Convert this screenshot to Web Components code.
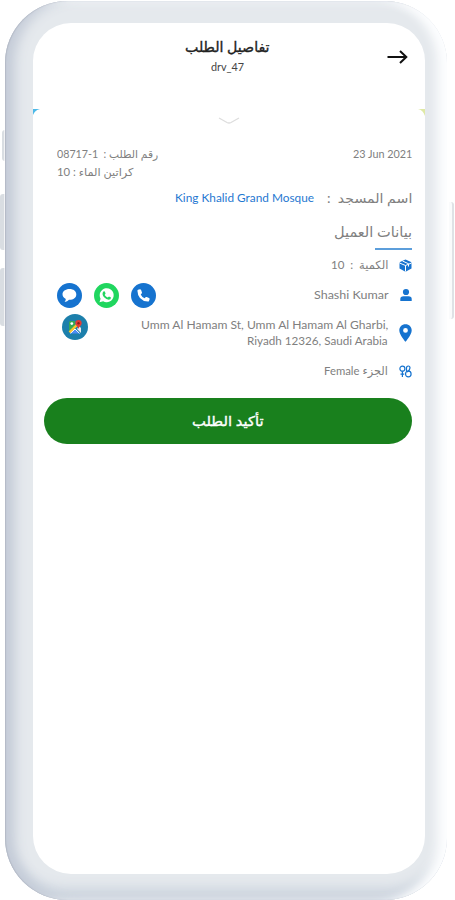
<!DOCTYPE html>
<html lang="ar">
<head>
<meta charset="utf-8">
<meta name="viewport" content="width=device-width, initial-scale=1">
<title>تفاصيل الطلب</title>
<style>
    body {
        margin: 0;
        background: #fff;
        font-family: Lato, "DejaVu Sans", sans-serif;
        color: #808080;
        overflow: hidden;
    }
</style>
</head>
<body>
<phone-frame>
    <order-header>
        <fit-text slot="title" width="85" size="14" medium>تفاصيل الطلب</fit-text>
        <fit-text slot="driver" width="33" size="10.5">drv_47</fit-text>
    </order-header>
    <order-sheet>
        <order-meta>
            <fit-text slot="date" width="59" size="11">23 Jun 2021</fit-text>
            <fit-text slot="number" width="101" size="11" rtl>رقم الطلب : &nbsp;<bdi dir="ltr">08717-1</bdi></fit-text>
            <fit-text slot="boxes" width="76" size="11" rtl>كراتين الماء : 10</fit-text>
        </order-meta>
        <mosque-row>
            <fit-text slot="label" width="85" size="13" rtl>اسم المسجد &nbsp;:</fit-text>
            <fit-text slot="name" width="139" size="12">King Khalid Grand Mosque</fit-text>
        </mosque-row>
        <section-title><fit-text width="78" size="14" rtl>بيانات العميل</fit-text></section-title>
        <info-row icon="box" style="height: 30px">
            <fit-text width="57" size="11.5" rtl>الكمية &nbsp;: &nbsp;10</fit-text>
        </info-row>
        <info-row icon="person" style="height: 30px">
            <fit-text width="74" size="12">Shashi Kumar</fit-text>
            <round-button slot="actions" icon="chat" color="#1673cf"></round-button>
            <round-button slot="actions" icon="whatsapp" color="#20d65f"></round-button>
            <round-button slot="actions" icon="phone" color="#1673cf"></round-button>
        </info-row>
        <info-row icon="pin" style="height: 46px">
            <fit-text width="247" size="11.5">Umm Al Hamam St, Umm Al Hamam Al Gharbi,</fit-text>
            <fit-text width="141" size="11.5">Riyadh 12326, Saudi Arabia</fit-text>
            <round-button slot="actions" class="map" icon="map" color="#1c7fab"></round-button>
        </info-row>
        <info-row icon="gender" style="height: 30px">
            <fit-text width="64" size="11.5" rtl>الجزء Female</fit-text>
        </info-row>
        <confirm-button><fit-text width="72" size="13.5" medium>تأكيد الطلب</fit-text></confirm-button>
    </order-sheet>
</phone-frame>

<script>
const icons = {
    box: `<svg width="13" height="13" viewBox="0 0 26 26"><path fill="#1673cf" d="M13 1 L24 6 L25 8 V19 L14 25 H12 L1 19 V8 L2 6Z"/><path fill="none" stroke="#fff" stroke-width="2" d="M1 8 L13 13 L25 8 M13 13 V25 M7 4 L19 9.5 V15"/></svg>`,
    person: `<svg width="12" height="14" viewBox="0 0 12 14"><circle cx="6" cy="4" r="3.1" fill="#1673cf"/><path fill="#1673cf" d="M0.3 13 V11 Q0.3 8.3 3.5 8.3 H8.5 Q11.7 8.3 11.7 11 V13Z"/></svg>`,
    pin: `<svg width="13" height="18" viewBox="0 0 13 18"><path fill="#1673cf" fill-rule="evenodd" d="M6.5 0.3 C2.8 0.3 0.3 3 0.3 6.4 C0.3 10.7 6.5 17.7 6.5 17.7 S12.7 10.7 12.7 6.4 C12.7 3 10.2 0.3 6.5 0.3Z M6.5 4 A2.4 2.4 0 1 1 6.5 8.8 A2.4 2.4 0 1 1 6.5 4Z"/></svg>`,
    gender: `<svg width="13" height="13" viewBox="0 0 13 13" fill="none" stroke="#1673cf" stroke-width="1.2"><circle cx="3.4" cy="3.7" r="2.5"/><path d="M3.4 6.2 V12 M1.5 9.2 H5.2 M7.5 6.5 V3.2 Q7.5 1 9.3 1 Q11 1 11 3 L10 5.8 M8 7 L10 5.2"/><circle cx="9.3" cy="9" r="2.8"/></svg>`,
    chat: `<svg width="25" height="25" viewBox="0 0 25 25"><path fill="#fff" d="M12.5 6 C8.4 6 5.5 8.3 5.5 11.3 C5.5 13.5 6.8 15 8.8 16 Q8.8 17.5 7.6 19 Q10.5 18.6 12 16.8 C16.5 16.9 19.3 14.5 19.3 11.4 C19.3 8.2 16.5 6 12.5 6Z"/></svg>`,
    whatsapp: `<svg width="25" height="25" viewBox="0 0 25 25"><path fill="#fff" d="M5.5 19.3 L6.6 15.7 A7 7 0 1 1 9.2 18.3Z"/><path fill="#20d65f" d="M9 8.9 Q10 7.8 10.8 8.6 L11.6 10.5 L10.7 11.9 Q11.8 13.8 13.7 14.5 L15 13.4 L17 14.4 Q17 16.8 14.6 16.8 Q12.3 16.6 10.1 14.3 Q7.7 11.2 9 8.9Z"/></svg>`,
    phone: `<svg width="25" height="25" viewBox="0 0 25 25"><path fill="#fff" d="M7 6.7 L9 6.3 Q9.8 6.3 10.1 7 L11 9.4 Q11.1 10.2 10.4 10.7 L9.7 11.4 Q10.9 14 13.6 15.3 L14.5 14.3 Q15 13.8 15.7 14.1 L18 15 Q18.8 15.5 18.6 16.2 L18 18 Q17.7 18.7 16.8 18.6 Q6.8 17.8 6.4 7.8 Q6.4 7 7 6.7Z"/></svg>`,
    map: `<svg width="26" height="26" viewBox="0 0 26 26" fill="none"><path fill="#35a854" d="M8 7 H13 V13 L7 18.5 V8Z"/><path fill="#e8ecef" d="M17 12 L19 14 V19 L15 15Z"/><path fill="#4c8df5" d="M13 14.5 L18 19.5 H8Z"/><path stroke="#fbc62d" stroke-width="2.5" d="M7.5 18.4 L15.5 10.4"/><path stroke="#fff" stroke-width="1" d="M8.5 19.3 L13 15 L17.5 19.3"/><circle cx="9.8" cy="9.6" r="1.4" fill="#fff"/><path fill="#e43b34" d="M16.5 6 A3.2 3.2 0 0 1 19.7 9.2 C19.7 11.2 17 12.5 16.6 15 C16.2 12.5 13.3 11.2 13.3 9.2 A3.2 3.2 0 0 1 16.5 6Z"/><circle cx="16.5" cy="9.2" r="1.2" fill="#8c1d1a"/></svg>`,
};

// one line of text, stretched to a given width
class FitText extends HTMLElement {
    constructor() {
        super();
        this.shadowDOM = this.attachShadow({ mode: "open" });
    }

    connectedCallback() {
        const width = Number(this.getAttribute("width"));
        this.shadowDOM.innerHTML = `
        <style>
            :host {
                display: block;
                width: ${width}px;
                font-size: ${this.getAttribute("size")}px;
                -webkit-text-stroke: ${this.hasAttribute("medium") ? "0.35px" : "0"};
                white-space: nowrap;
                direction: ltr;
            }
            span {
                display: inline-block;
                transform-origin: left center;
            }
        </style>
        <span dir="${this.hasAttribute("rtl") ? "rtl" : "ltr"}"><slot></slot></span>`;
        const span = this.shadowDOM.querySelector("span");
        span.style.transform = `scaleX(${width / span.offsetWidth})`;
    }
}

class PhoneFrame extends HTMLElement {
    constructor() {
        super();
        this.attachShadow({ mode: "open" }).innerHTML = `
        <style>
            :host {
                display: block;
                position: relative;
                box-sizing: border-box;
                width: 455px;
                height: 900px;
                padding: 1px 8px 0 5px;
                overflow: hidden;
            }
            .body {
                box-sizing: border-box;
                height: 899px;
                padding: 22px 22px 26px 28px;
                border-radius: 62px;
                background: #e5e9ed;
                box-shadow: inset 1px 0 1px #b4bac6, inset -12px 0 10px -2px #fcfdfe,
                    inset 13px 0 12px -3px #c5ccd8, inset 0 -15px 12px -3px #cdd5df,
                    inset 0 4px 6px #edf1f4;
            }
            .screen {
                height: 851px;
                border-radius: 38px;
                background: #fff;
                overflow: hidden;
            }
            .key {
                position: absolute;
                box-sizing: border-box;
                left: 0;
                width: 5px;
                background: #d9dde2;
                border-right: 1px solid #f2f3f5;
                border-radius: 3px 0 0 3px;
            }
            .power {
                left: 449px;
                width: 5px;
                background: #fafbfc;
                border-right: 2px solid #dfe2e6;
                border-radius: 0 3px 3px 0;
            }
        </style>
        <div class="key" style="left: 2px; top: 130px; width: 3px; height: 31px"></div>
        <div class="key" style="top: 194px; height: 56px"></div>
        <div class="key" style="top: 268px; height: 58px"></div>
        <div class="key power" style="top: 202px; height: 117px"></div>
        <div class="body"><div class="screen"><slot></slot></div></div>`;
    }
}

class OrderHeader extends HTMLElement {
    constructor() {
        super();
        this.attachShadow({ mode: "open" }).innerHTML = `
        <style>
            :host {
                display: grid;
                grid-template-columns: 38px 1fr 38px;
                align-items: start;
                height: 86px;
                color: #222;
            }
            .titles {
                display: flex;
                flex-direction: column;
                align-items: center;
                padding: 14px 3px 0 0;
                line-height: 20px;
            }
            slot[name=driver] {
                display: block;
                color: #444;
            }
            svg {
                margin-top: 26px;
            }
        </style>
        <div></div>
        <div class="titles"><slot name="title"></slot><slot name="driver"></slot></div>
        <svg width="22" height="16" viewBox="0 0 22 16" fill="none" stroke="#111" stroke-width="2"><path d="M0.5 8 H19 M13 2 L19.3 8 L13 14"/></svg>`;
    }
}

class OrderSheet extends HTMLElement {
    constructor() {
        super();
        this.attachShadow({ mode: "open" }).innerHTML = `
        <style>
            :host {
                display: block;
            }
            .handle {
                display: flex;
                justify-content: space-between;
                height: 36px;
            }
            .handle svg:nth-child(2) {
                margin-top: 8px;
            }
            .content {
                padding: 0 13px 0 11px;
            }
        </style>
        <div class="handle">
            <svg width="7" height="7"><path fill="#4db9e8" d="M0 0 H7 Q2 1 0 6Z"/></svg>
            <svg width="22" height="8" fill="none" stroke="#ddd" stroke-width="1.3"><path d="M1 1 L9 5.5 Q11 6.5 13 5.5 L21 1"/></svg>
            <svg width="7" height="7"><path fill="#dfe9a5" d="M0 0 H7 V7 Q5 1 0 0Z"/></svg>
        </div>
        <div class="content"><slot></slot></div>`;
    }
}

class OrderMeta extends HTMLElement {
    constructor() {
        super();
        this.attachShadow({ mode: "open" }).innerHTML = `
        <style>
            :host {
                display: flex;
                justify-content: space-between;
                height: 43px;
                padding-left: 13px;
                line-height: 18px;
            }
        </style>
        <div><slot name="number"></slot><slot name="boxes"></slot></div>
        <slot name="date"></slot>`;
    }
}

class MosqueRow extends HTMLElement {
    constructor() {
        super();
        this.attachShadow({ mode: "open" }).innerHTML = `
        <style>
            :host {
                display: flex;
                flex-direction: row-reverse;
                gap: 13px;
                height: 34px;
                line-height: 20px;
            }
            slot[name=name] {
                display: block;
                color: #1f78d1;
            }
        </style>
        <slot name="label"></slot><slot name="name"></slot>`;
    }
}

class SectionTitle extends HTMLElement {
    constructor() {
        super();
        this.attachShadow({ mode: "open" }).innerHTML = `
        <style>
            :host {
                display: flex;
                flex-direction: column;
                align-items: flex-end;
                height: 28px;
                line-height: 20px;
            }
            hr {
                width: 37px;
                height: 2px;
                margin: 6px 0 0;
                border: 0;
                background: #5c9edb;
            }
        </style>
        <slot></slot><hr>`;
    }
}

class InfoRow extends HTMLElement {
    constructor() {
        super();
        this.attachShadow({ mode: "open" }).innerHTML = `
        <style>
            :host {
                display: flex;
                align-items: center;
                padding-left: 12.5px;
            }
            .actions {
                display: flex;
                gap: 12px;
            }
            .text {
                display: flex;
                flex: 1;
                flex-direction: column;
                align-items: flex-end;
                line-height: 16px;
                min-width: 0;
            }
            .icon {
                display: flex;
                justify-content: center;
                width: 13px;
                margin-left: 11px;
            }
            ::slotted(.map) {
                margin: -12px 0 0 5.5px;
            }
        </style>
        <div class="actions"><slot name="actions"></slot></div>
        <div class="text"><slot></slot></div>
        <div class="icon">${icons[this.getAttribute("icon")]}</div>`;
    }
}

class RoundButton extends HTMLElement {
    constructor() {
        super();
        this.attachShadow({ mode: "open" }).innerHTML = `
        <style>
            :host {
                display: flex;
                align-items: center;
                justify-content: center;
                width: 25px;
                height: 25px;
                border-radius: 50%;
                background: ${this.getAttribute("color")};
            }
            :host(.map) {
                width: 26px;
                height: 26px;
            }
        </style>
        ${icons[this.getAttribute("icon")]}`;
    }
}

class ConfirmButton extends HTMLElement {
    constructor() {
        super();
        this.attachShadow({ mode: "open" }).innerHTML = `
        <style>
            :host {
                display: flex;
                align-items: center;
                justify-content: center;
                height: 46px;
                margin-top: 12px;
                border-radius: 23px;
                background: #19801d;
                color: #fff;
                line-height: 20px;
            }
        </style>
        <slot></slot>`;
    }
}

customElements.define("phone-frame", PhoneFrame);
customElements.define("order-header", OrderHeader);
customElements.define("order-sheet", OrderSheet);
customElements.define("order-meta", OrderMeta);
customElements.define("mosque-row", MosqueRow);
customElements.define("section-title", SectionTitle);
customElements.define("info-row", InfoRow);
customElements.define("round-button", RoundButton);
customElements.define("confirm-button", ConfirmButton);
customElements.define("fit-text", FitText);
</script>
</body>
</html>
